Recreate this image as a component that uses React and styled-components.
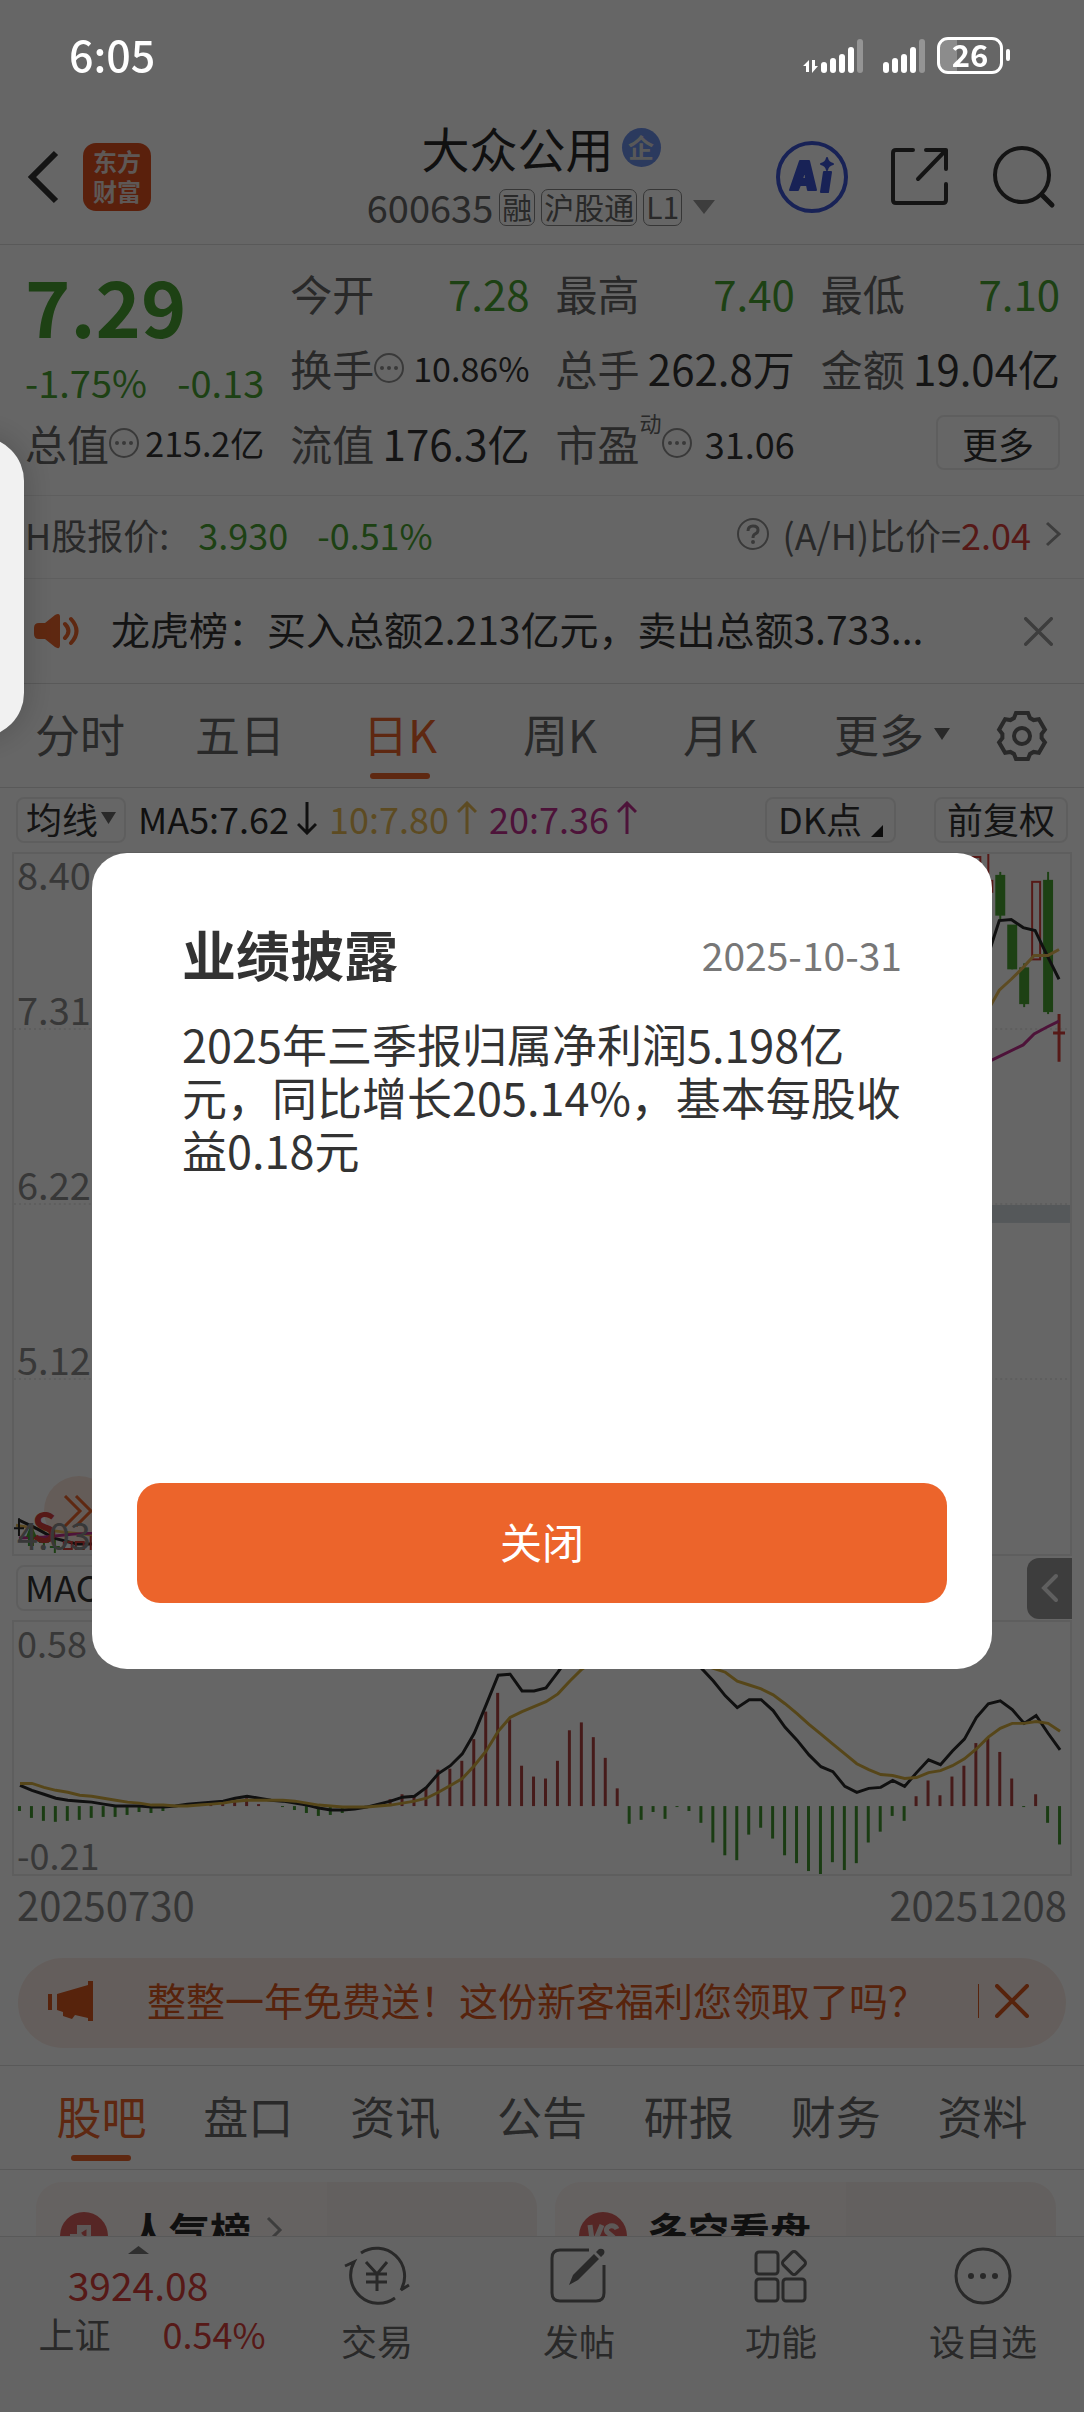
import React, { useState } from "react";
import styled, { createGlobalStyle } from "styled-components";

const GlobalStyle = createGlobalStyle`
  * {
    box-sizing: border-box;
  }

  body {
    margin: 0;
    background: #fff;
    color: #333;
    font-family: "Noto Sans CJK SC", sans-serif;
  }

  button {
    margin: 0;
    padding: 0;
    border: 0;
    background: none;
    color: inherit;
    font: inherit;
    cursor: pointer;
  }

  a {
    color: inherit;
    text-decoration: none;
  }

  svg {
    display: block;
  }
`;

const colors = {
  up: "#d8403a",
  down: "#4aa232",
  orange: "#ec642b",
  text: "#333",
  label: "#666",
  axis: "#8c8c8c",
  line: "#dedede",
  box: "#ececec",
  ma10: "#e8bb55",
  ma20: "#c03090",
};

const Page = styled.div`
  display: flex;
  flex-direction: column;
  height: 100vh;
  overflow: hidden;
`;

const Main = styled.main`
  flex: 1;
  min-height: 0;
  overflow: hidden;
`;

/* status bar */

const StatusBar = styled.div`
  position: relative;
  z-index: 20;
  display: flex;
  align-items: center;
  justify-content: space-between;
  height: 114px;
  padding: 0 74px 4px 69px;
  color: #fff;
`;

const Clock = styled.time`
  padding-bottom: 4px;
  font-size: 43px;
  font-weight: 500;
  line-height: 48px;
`;

const StatusIcons = styled.div`
  display: flex;
  align-items: center;
  gap: 12px;
`;

const Battery = styled.div`
  display: flex;
  align-items: center;
  gap: 3px;

  &::after {
    content: "";
    width: 4px;
    height: 12px;
    border-radius: 2px;
    background: #fff;
  }
`;

const BatteryCell = styled.div`
  width: 66px;
  height: 37px;
  border: 3px solid #fff;
  border-radius: 11px;
  background: linear-gradient(to right, #8c8c8c 28%, transparent 28%);
  font-size: 31px;
  font-weight: 700;
  line-height: 28px;
  text-align: center;
`;

/* header */

const Header = styled.header`
  display: grid;
  grid-template-columns: 1fr auto 1fr;
  align-items: center;
  height: 131px;
  padding: 0 28px 4px 26px;
  border-bottom: 1px solid ${colors.line};
`;

const HeaderLeft = styled.div`
  display: flex;
  align-items: center;
  gap: 21px;
`;

const Logo = styled.a`
  width: 68px;
  height: 68px;
  padding: 3px 0;
  border-radius: 13px;
  background: #e0501f;
  color: #eadcd6;
  font-size: 24px;
  font-weight: 700;
  line-height: 30px;
  text-align: center;
`;

const HeaderCenter = styled.div`
  display: flex;
  flex-direction: column;
  align-items: center;
`;

const StockName = styled.h1`
  display: flex;
  align-items: center;
  gap: 8px;
  margin: 0;
  font-size: 48px;
  font-weight: 400;
  line-height: 60px;
  color: #2a2a2a;
`;

const CompanyBadge = styled.span`
  width: 39px;
  height: 39px;
  border-radius: 50%;
  background: #6d91ec;
  color: #ddd;
  font-size: 26px;
  font-weight: 700;
  line-height: 38px;
  text-align: center;
`;

const StockCode = styled.button`
  display: flex;
  align-items: center;
  gap: 6px;
  color: ${colors.label};
  font-size: 38px;
  line-height: 60px;
`;

const Tag = styled.span`
  height: 37px;
  padding: 0 2px;
  border: 1px solid #888;
  border-radius: 7px;
  font-size: 30px;
  line-height: 33px;
`;

const CodeCaret = styled.span`
  margin-left: 5px;
`;

const HeaderRight = styled.div`
  display: flex;
  align-items: center;
  justify-content: flex-end;
  gap: 41px;
`;

/* quote */

const Quote = styled.section`
  display: grid;
  grid-template-columns: repeat(4, 1fr);
  grid-template-rows: repeat(3, 75px);
  column-gap: 26px;
  height: 251px;
  padding: 10px 24px 16px 25px;
  border-bottom: 1px solid ${colors.box};
`;

const PriceBlock = styled.div`
  grid-row: span 2;
  display: flex;
  flex-direction: column;
  color: ${colors.down};
`;

const Price = styled.strong`
  font-size: 77px;
  font-weight: 700;
  line-height: 100px;
`;

const Change = styled.div`
  display: flex;
  justify-content: space-between;
  font-size: 38px;
  line-height: 54px;
`;

const Cell = styled.div`
  display: flex;
  align-items: center;
  justify-content: space-between;
  white-space: nowrap;
  color: ${(p) => p.$color || colors.text};
  font-size: ${(p) => p.$size || 42}px;
`;

const CellLabel = styled.span`
  display: flex;
  align-items: center;
  color: ${colors.label};
  font-size: 42px;

  sup {
    align-self: flex-start;
    font-size: 22px;
    line-height: 20px;
  }
`;

const MoreButton = styled.button`
  justify-self: end;
  align-self: center;
  width: 124px;
  height: 55px;
  border: 2px solid ${colors.box};
  border-radius: 8px;
  font-size: 36px;
  line-height: 46px;
`;

const HShare = styled.section`
  display: flex;
  align-items: center;
  justify-content: space-between;
  height: 83px;
  padding: 0 22px 6px 25px;
  border-bottom: 1px solid ${colors.box};
  color: ${colors.label};
  font-size: 36px;
`;

const HShareSide = styled.div`
  display: flex;
  align-items: center;
  gap: ${(p) => p.$gap}px;
`;

const Tinted = styled.span`
  color: ${(p) => p.$color};
`;

const News = styled.section`
  display: flex;
  align-items: center;
  height: 105px;
  padding: 0 31px 0 32px;
  border-bottom: 1px solid ${colors.line};
`;

const NewsText = styled.p`
  flex: 1;
  margin: 0 0 0 31px;
  padding-bottom: 6px;
  font-size: 39px;
`;

/* tabs */

const ChartTabs = styled.nav`
  display: grid;
  grid-template-columns: repeat(5, 160fr) 184fr 100fr;
  height: 104px;
  border-bottom: 1px solid ${colors.line};
`;

const Tab = styled.button`
  position: relative;
  display: flex;
  flex: 1;
  align-items: center;
  justify-content: center;
  gap: 10px;
  padding-bottom: 4px;
  color: ${(p) => (p.$active ? colors.orange : colors.label)};
  font-size: 45px;

  &::after {
    content: "";
    display: ${(p) => (p.$active ? "block" : "none")};
    position: absolute;
    bottom: 8px;
    left: calc(50% - 30px);
    width: 60px;
    height: 6px;
    border-radius: 3px;
    background: ${colors.orange};
  }
`;

const GearButton = styled.button`
  padding-left: 12px;
`;

/* chart */

const Indicators = styled.div`
  display: flex;
  align-items: center;
  gap: 12px;
  height: 64px;
  padding: 0 16px;
  font-size: 36px;
  white-space: nowrap;
`;

const BoxButton = styled.button`
  display: flex;
  align-items: center;
  gap: 3px;
  height: 46px;
  padding: 0 ${(p) => p.$pad || 8}px 4px;
  border: 2px solid ${colors.box};
  border-radius: 8px;
  font-size: 36px;
  line-height: 38px;
`;

const MaValue = styled.span`
  display: flex;
  align-items: center;
  gap: 8px;
  padding-bottom: 4px;
  color: ${(p) => p.$color};
`;

const IndicatorActions = styled.div`
  display: flex;
  flex: 1;
  justify-content: flex-end;
  gap: 38px;
`;

const Corner = styled.i`
  align-self: flex-end;
  width: 0;
  height: 0;
  margin-left: 6px;
  border-bottom: 12px solid #222;
  border-left: 12px solid transparent;
`;

const Chart = styled.div`
  position: relative;
  display: grid;
  height: ${(p) => p.$height}px;
  margin: 0 12px;
  border: 2px solid ${colors.box};

  > * {
    grid-area: 1 / 1;
  }
`;

const Plot = styled.svg`
  position: relative;
  width: 100%;
  height: 100%;
  pointer-events: none;
`;

const Scale = styled.div`
  position: relative;
  display: grid;
  grid-auto-rows: minmax(0, 1fr);
  color: ${colors.axis};
  font-size: ${(p) => p.$size}px;
  line-height: 32px;
  pointer-events: none;
`;

const ScaleRow = styled.div`
  display: flex;
  flex-direction: column;
  justify-content: ${(p) => (p.$both ? "space-between" : "flex-end")};
  padding: 4px 0 4px 3px;
`;

const ExpandButton = styled.button`
  position: absolute;
  bottom: 8px;
  left: 30px;
  display: flex;
  align-items: center;
  justify-content: center;
  width: 70px;
  height: 70px;
  border-radius: 50%;
  background: #fbe6dc;
`;

const SubHeader = styled.div`
  display: flex;
  align-items: center;
  justify-content: space-between;
  height: 64px;
  padding: 0 12px 0 16px;
`;

const Collapse = styled.button`
  display: flex;
  align-items: center;
  justify-content: center;
  width: 45px;
  height: 61px;
  border-radius: 12px 0 0 12px;
  background: #999;
`;

const Dates = styled.div`
  display: flex;
  justify-content: space-between;
  height: 82px;
  padding: 0 17px;
  color: #888;
  font-size: 40px;
  line-height: 57px;
`;

const Banner = styled.div`
  display: flex;
  align-items: center;
  height: 90px;
  margin: 0 18px 17px;
  padding: 0 37px 4px 29px;
  border-radius: 45px;
  background: #fbece6;
  color: #d9571f;
  font-size: 39px;

  a {
    flex: 1;
    margin-left: 54px;
    padding-bottom: 4px;
  }
`;

const BannerClose = styled.button`
  padding-left: 16px;
  border-left: 1px solid #d9571f;
`;

const InfoTabs = styled.nav`
  display: flex;
  height: 105px;
  padding: 0 28px;
  border-top: 1px solid ${colors.line};
  border-bottom: 1px solid ${colors.line};
`;

const Cards = styled.div`
  display: grid;
  grid-template-columns: 1fr 1fr;
  gap: 18px;
  padding: 12px 28px 0 36px;
`;

const Card = styled.a`
  display: flex;
  align-items: center;
  gap: 20px;
  height: 160px;
  padding: 0 24px 52px;
  border-radius: 26px;
  background: linear-gradient(to right, #fdf4f2 58%, #f8efed 58%);
  color: #2a2a2a;
  font-size: 41px;
  font-weight: 700;
`;

const CardTitle = styled.span`
  display: flex;
  align-items: center;
  gap: 14px;
  padding-bottom: 12px;
`;

/* bottom bar */

const BottomBar = styled.footer`
  display: grid;
  grid-template-columns: 276fr repeat(4, 202fr);
  height: 176px;
  border-top: 1px solid ${colors.line};
  background: #fbfbfb;
  color: ${colors.label};
  font-size: 36px;
`;

const IndexBlock = styled.button`
  display: flex;
  flex-direction: column;
  align-items: center;
  padding-top: 9px;
  color: ${colors.up};
`;

const IndexValue = styled.span`
  margin-top: 4px;
  font-size: 39px;
  line-height: 52px;
`;

const IndexRow = styled.span`
  display: flex;
  gap: 52px;
  margin-left: 28px;
  line-height: 46px;
`;

const NavItem = styled.button`
  display: flex;
  flex-direction: column;
  align-items: center;
  padding: 9px 0 0;
  line-height: 52px;

  svg {
    margin-bottom: 8px;
  }
`;

/* dialog */

const Overlay = styled.div`
  position: fixed;
  inset: 0;
  z-index: 10;
  display: flex;
  align-items: center;
  justify-content: center;
  padding: 110px 92px 0;
  background: rgba(0, 0, 0, 0.6);
`;

const Dialog = styled.section`
  width: 100%;
  padding: 69px 45px 66px;
  border-radius: 35px;
  background: #fff;
`;

const DialogHead = styled.div`
  display: flex;
  align-items: center;
  justify-content: space-between;
  margin: 0 45px 31px;
`;

const DialogTitle = styled.h2`
  margin: 0;
  font-size: 54px;
  font-weight: 700;
  line-height: 64px;
`;

const DialogDate = styled.time`
  color: #777;
  font-size: 39px;
`;

const DialogText = styled.p`
  min-height: 466px;
  margin: 0 45px;
  font-size: 45px;
  line-height: 53px;
`;

const DialogButton = styled.button`
  display: block;
  width: 100%;
  height: 120px;
  padding-bottom: 6px;
  border-radius: 23px;
  background: ${colors.orange};
  color: #fff;
  font-size: 42px;
`;

const SideHandle = styled.div`
  position: fixed;
  top: 437px;
  left: -64px;
  z-index: 30;
  width: 88px;
  height: 300px;
  border-radius: 44px;
  background: #f1f1f1;
  box-shadow: 0 0 34px rgba(0, 0, 0, 0.22);
`;

/* icons */

const Signal = ({ data }) => (
  <svg width={data ? 68 : 42} height="37" viewBox={data ? "-18 0 68 37" : "0 0 42 37"}>
    {data && (
      <path d="M-18 29 L-12 23 V35 H-15 V29 Z M-9 23 H-6 V29 L-3 29 L-9 36 Z" fill="#fff" />
    )}
    <g fill="#fff">
      <rect x="0" y="25" width="6" height="11" rx="3" />
      <rect x="9" y="21" width="6" height="15" rx="3" />
      <rect x="18" y="17" width="6" height="19" rx="3" />
      <rect x="27" y="10" width="6" height="26" rx="3" />
      <rect x="36" y="2" width="6" height="34" rx="3" fill="#949494" />
    </g>
  </svg>
);

const Chevron = ({ w, h, stroke, color, left, round }) => (
  <svg width={w} height={h} viewBox={`0 0 ${w} ${h}`}>
    <polyline
      points={
        left
          ? `${w - stroke},${stroke} ${stroke},${h / 2} ${w - stroke},${h - stroke}`
          : `${stroke},${stroke} ${w - stroke},${h / 2} ${stroke},${h - stroke}`
      }
      fill="none"
      stroke={color}
      strokeWidth={stroke}
      strokeLinecap={round ? "round" : "butt"}
    />
  </svg>
);

const Caret = ({ w, h, color, up }) => (
  <svg width={w} height={h} viewBox="0 0 10 10" preserveAspectRatio="none">
    <path d={up ? "M0 10 L5 0 L10 10 Z" : "M0 0 H10 L5 10 Z"} fill={color} />
  </svg>
);

const Cross = ({ size, color, stroke }) => (
  <svg width={size} height={size} viewBox="0 0 34 34">
    <path d="M2 2 L32 32 M32 2 L2 32" stroke={color} strokeWidth={stroke} strokeLinecap="round" />
  </svg>
);

const Arrow = ({ up }) => (
  <svg width="20" height="34" viewBox="0 0 20 34">
    <path
      d={up ? "M10 33 V2 M1 11 L10 2 L19 11" : "M10 1 V32 M1 23 L10 32 L19 23"}
      fill="none"
      stroke="currentColor"
      strokeWidth="3"
    />
  </svg>
);

const Dots = () => (
  <svg width="30" height="30" viewBox="0 0 30 30">
    <circle cx="15" cy="15" r="14" fill="none" stroke="#909090" strokeWidth="2" />
    <g fill="#909090">
      <circle cx="8" cy="15" r="2" />
      <circle cx="15" cy="15" r="2" />
      <circle cx="22" cy="15" r="2" />
    </g>
  </svg>
);

const AiIcon = () => (
  <svg width="72" height="72" viewBox="0 0 72 72">
    <circle cx="36" cy="36" r="34" fill="none" stroke="#3d56d8" strokeWidth="4" />
    <g fill="#3d56d8" stroke="#3d56d8" strokeWidth="2" strokeLinejoin="round">
      <path
        fillRule="evenodd"
        d="M24 20 H33 L40 49 H32 L31 44 H24 L22 49 H14 Z M29 28 L26 38 H30 Z"
      />
      <path d="M48 31 H55 L52 51 H45 Z" />
      <path d="M51 17 Q52 22 57 23 Q52 24 51 29 Q50 24 45 23 Q50 22 51 17 Z" />
    </g>
  </svg>
);

const ShareIcon = () => (
  <svg width="62" height="62" viewBox="0 0 62 62">
    <path
      d="M24 4 H7 Q4 4 4 7 V54 Q4 57 7 57 H54 Q57 57 57 54 V38 M37 4 H57 V23 M57 4 L29 33"
      fill="none"
      stroke="#333"
      strokeWidth="4"
      strokeLinecap="round"
      strokeLinejoin="round"
    />
  </svg>
);

const SearchIcon = () => (
  <svg width="64" height="64" viewBox="0 0 64 64">
    <circle cx="30" cy="30" r="27" fill="none" stroke="#333" strokeWidth="4" />
    <path d="M50 50 L60 60" stroke="#333" strokeWidth="5" strokeLinecap="round" />
  </svg>
);

const QuestionIcon = () => (
  <svg width="34" height="34" viewBox="0 0 34 34" fill="none" stroke="#909090" strokeWidth="3">
    <circle cx="17" cy="17" r="15" strokeWidth="2" />
    <path d="M12 14 Q12 9 17 9 Q22 9 22 13 Q22 16 19 17 Q17 18 17 21" />
    <circle cx="17" cy="25" r="1" strokeWidth="2" />
  </svg>
);

const SpeakerIcon = () => (
  <svg width="48" height="40" viewBox="0 0 48 40">
    <path
      d="M7 12 H13 L23 4 Q28 1 28 6 V34 Q28 39 23 36 L13 28 H7 Q2 28 2 23 V17 Q2 12 7 12 Z"
      fill={colors.orange}
    />
    <path
      d="M33 13 Q40 20 33 27 M39 8 Q50 20 39 32"
      fill="none"
      stroke={colors.orange}
      strokeWidth="4"
      strokeLinecap="round"
    />
  </svg>
);

const MegaphoneIcon = () => (
  <svg width="46" height="40" viewBox="0 0 46 40" fill="#d9571f">
    <rect x="1" y="13" width="4" height="16" />
    <path d="M10 13 L41 4 V0 H46 V40 H41 V37 L28 34 L25 38 L16 35 V31 L10 29 Z" />
  </svg>
);

// Outline of one tooth, repeated every 60 degrees
const tooth = [[-8, -18], [-6, -23], [6, -23], [8, -18]];
const gearPoints = [0, 1, 2, 3, 4, 5]
  .flatMap((k) => {
    const a = (k * Math.PI) / 3;
    return tooth.map(([x, y]) => {
      const px = 26 + x * Math.cos(a) - y * Math.sin(a);
      const py = 26 + x * Math.sin(a) + y * Math.cos(a);
      return `${px.toFixed(1)},${py.toFixed(1)}`;
    });
  })
  .join(" ");

const GearIcon = () => (
  <svg width="52" height="52" viewBox="0 0 52 52" fill="none" stroke={colors.label} strokeWidth="4">
    <polygon points={gearPoints} />
    <circle cx="26" cy="26" r="8" />
  </svg>
);

const TradeIcon = () => (
  <svg width="66" height="60" viewBox="0 0 66 60" fill="none" stroke="#666" strokeWidth="3">
    <path d="M17 7 A28 28 0 0 1 57 44 L65 39" />
    <path d="M51 52 A28 28 0 0 1 10 16 L1 20" />
    <path d="M22 16 L33 28 L43 16 M33 28 V45 M22 28 H43 M22 36 H43" />
  </svg>
);

const PostIcon = () => (
  <svg width="60" height="60" viewBox="0 0 60 60">
    <path
      d="M40 4 H11 Q3 4 3 12 V47 Q3 55 11 55 H47 Q55 55 55 47 V19"
      fill="none"
      stroke="#666"
      strokeWidth="3"
    />
    <path d="M20 39 L24 29 L45 8 L50 13 L29 34 Z M47 6 L50 3 Q53 2 55 4 Q56 6 55 8 L52 11 Z" fill="#666" />
  </svg>
);

const FeatureIcon = () => (
  <svg width="60" height="60" viewBox="0 0 60 60" fill="none" stroke="#666" strokeWidth="3">
    <rect x="5" y="6" width="22" height="22" rx="3" />
    <rect x="5" y="33" width="22" height="22" rx="3" />
    <rect x="32" y="33" width="22" height="22" rx="3" />
    <rect x="34" y="8" width="18" height="18" rx="3" transform="rotate(45 43 17)" />
  </svg>
);

const WatchIcon = () => (
  <svg width="60" height="60" viewBox="0 0 60 60">
    <circle cx="30" cy="30" r="27" fill="none" stroke="#666" strokeWidth="3" />
    <g fill="#666">
      <circle cx="18" cy="30" r="3" />
      <circle cx="30" cy="30" r="3" />
      <circle cx="42" cy="30" r="3" />
    </g>
  </svg>
);

const RankIcon = () => (
  <svg width="48" height="48" viewBox="0 0 48 48">
    <circle cx="24" cy="24" r="24" fill="#d8605c" />
    <path d="M10 22 H17 V13 H31 V25 H38 V36 H10 Z" fill="#e8dcda" />
    <path d="M22 22 L25 20 V31" fill="none" stroke="#d8605c" strokeWidth="3" />
  </svg>
);

const VsIcon = () => (
  <svg width="48" height="48" viewBox="0 0 48 48">
    <circle cx="24" cy="24" r="24" fill="#d8605c" />
    <path
      d="M11 13 L14 34 L23 13 M38 17 Q36 13 31 14 Q26 16 28 20 L34 25 Q36 31 30 33 Q25 34 22 31"
      fill="none"
      stroke="#e8dcda"
      strokeWidth="5"
    />
  </svg>
);

/* chart data */

const macdBars = [
  -5, -12, -15, -16, -15, -14, -12, -11, -11, -9, -6, -7, -5, -1, 0, 2, 3, 5, 7, 8, 2, 0,
  -1, -4, -7, -10, -9, -7, -3, 0, 3, 7, 12, 10, 19, 37, 38, 46, 68, 96, 115, 88, 41, 30,
  28, 46, 77, 85, 70, 49, 18, -18, -14, -6, -13, -1, -5, -17, -37, -50, -55, -29, -22, -33,
  -50, -58, -66, -69, -57, -65, -58, -37, -26, -10, -15, 10, 26, 11, 30, 41, 64, 69, 55, 28,
  -1, 12, -17, -39,
];

const dif = [
  166, 171, 175, 179, 181, 182, 183, 185, 187, 187, 187, 188, 188, 187, 185, 184, 183, 182,
  179, 177, 179, 181, 182, 184, 186, 189, 191, 191, 190, 188, 185, 182, 178, 177, 168, 154,
  146, 134, 113, 84, 54, 53, 70, 70, 67, 51, 34, 24, 18, 14, 12, 12, 14, 18, 24, 32, 40, 47,
  60, 75, 87, 79, 79, 90, 107, 120, 135, 147, 152, 167, 173, 169, 168, 161, 167, 153, 140,
  145, 131, 119, 97, 83, 80, 89, 103, 95, 113, 130,
];

const dea = [
  164, 164, 168, 171, 173, 176, 177, 179, 181, 183, 184, 186, 186, 187, 187, 186, 185, 184,
  182, 181, 181, 181, 181, 182, 184, 186, 187, 188, 188, 188, 187, 186, 184, 182, 179, 173,
  166, 159, 146, 131, 111, 97, 91, 86, 81, 73, 60, 48, 40, 34, 30, 28, 27, 28, 30, 34, 38,
  43, 47, 51, 60, 64, 68, 74, 83, 93, 104, 114, 124, 134, 144, 150, 155, 156, 159, 158, 153,
  151, 146, 139, 129, 117, 108, 103, 103, 101, 103, 111,
];

const candles = [
  { x: 977, top: 3, bottom: 60, high: 3, low: 40, up: true },
  { x: 989, top: 27, bottom: 38, high: 0, low: 38, up: true },
  { x: 1001, top: 22, bottom: 61, high: 18, low: 66 },
  { x: 1013, top: 72, bottom: 115, high: 72, low: 116 },
  { x: 1025, top: 115, bottom: 150, high: 110, low: 154 },
  { x: 1037, top: 28, bottom: 106, high: 28, low: 106, up: true },
  { x: 1049, top: 27, bottom: 158, high: 18, low: 161 },
];

const toPoints = (values) => values.map((y, i) => `${6 + i * 12},${y}`).join(" ");

const KLineChart = () => (
  <Plot viewBox="0 0 1060 704" preserveAspectRatio="none" aria-label="日K">
    <g stroke="#d5d5d5" strokeWidth="1" strokeDasharray="2 3">
      <path d="M0 176 H1060 M0 352 H1060 M0 528 H1060" />
    </g>
    <rect x="600" y="353" width="460" height="18" fill="#d4dbe0" />
    {candles.map((c) => (
      <g key={c.x} stroke={c.up ? colors.up : colors.down} strokeWidth="2">
        {(!c.up || c.high < c.top) && (
          <path d={`M${c.x - 11} ${c.high} V${c.up ? c.top : c.low}`} />
        )}
        <rect
          x={c.x - 15}
          y={c.top}
          width="8"
          height={c.bottom - c.top}
          fill={c.up ? "none" : colors.down}
        />
      </g>
    ))}
    <path d="M1049 161 V209 M1043 180 H1055" stroke={colors.up} strokeWidth="3" />
    <g fill="none" strokeWidth="3">
      <polyline points="960,150 980,95 989,67 1001,66 1013,74 1025,77 1037,102 1049,126" stroke="#2a2a2a" />
      <polyline points="960,177 980,153 989,137 1001,126 1013,114 1024,102 1038,102 1049,96" stroke={colors.ma10} />
      <polyline points="960,217 980,208 1013,192 1024,181 1037,174 1049,168" stroke={colors.ma20} />
      <polyline points="2,675 20,678 50,682 80,685 120,690" stroke={colors.ma10} />
      <polyline points="5,670 20,677 40,688 63,694 80,694 120,692" stroke="#2a2a2a" />
      <polyline points="5,688 30,687 60,684 80,683 120,680" stroke={colors.ma20} />
    </g>
    <path d="M5 668 V686 M0 678 H10" stroke="#2a2a2a" strokeWidth="2" />
    <path d="M12 687 L17 674 L23 687 H20 V696 H14 V687 Z" fill={colors.down} />
    <path d="M30 688 V700 M25 692 H35 M41 690 V703 M36 697 H46" stroke={colors.down} strokeWidth="2" />
    <path d="M50 692 H58 V699 H50 Z M62 692 H70 V699 H62 Z M77 686 V700" fill="none" stroke={colors.up} strokeWidth="2" />
    <text x="18" y="692" fill={colors.up} fontSize="40" fontWeight="700">S</text>
  </Plot>
);

const MacdChart = () => (
  <Plot viewBox="0 0 1060 256" preserveAspectRatio="none" aria-label="MACD">
    {macdBars.map((v, i) => (
      <rect
        key={i}
        x={4 + i * 12}
        y={v > 0 ? 187 - v : 187}
        width="3"
        height={Math.abs(v)}
        fill={v > 0 ? "#b04441" : "#439630"}
      />
    ))}
    <polyline points={toPoints(dif)} fill="none" stroke="#2a2a2a" strokeWidth="3" />
    <polyline points={toPoints(dea)} fill="none" stroke="#d8b040" strokeWidth="3" />
  </Plot>
);

const chartTabs = ["分时", "五日", "日K", "周K", "月K"];
const infoTabs = ["股吧", "盘口", "资讯", "公告", "研报", "财务", "资料"];

const App = () => {
  const [open, setOpen] = useState(true);
  const [period, setPeriod] = useState("日K");
  const [section, setSection] = useState("股吧");

  return (
    <>
      <GlobalStyle />
      <Page>
        <StatusBar>
          <Clock>6:05</Clock>
          <StatusIcons>
            <Signal data />
            <Signal />
            <Battery>
              <BatteryCell>26</BatteryCell>
            </Battery>
          </StatusIcons>
        </StatusBar>

        <Header>
          <HeaderLeft>
            <button aria-label="返回">
              <Chevron w={36} h={60} stroke={6} color="#333" left />
            </button>
            <Logo href="#home">
              东方
              <br />
              财富
            </Logo>
          </HeaderLeft>
          <HeaderCenter>
            <StockName>
              大众公用<CompanyBadge>企</CompanyBadge>
            </StockName>
            <StockCode>
              600635
              <Tag>融</Tag>
              <Tag>沪股通</Tag>
              <Tag>L1</Tag>
              <CodeCaret><Caret w={22} h={14} color="#999" /></CodeCaret>
            </StockCode>
          </HeaderCenter>
          <HeaderRight>
            <button aria-label="AI"><AiIcon /></button>
            <button aria-label="分享"><ShareIcon /></button>
            <button aria-label="搜索"><SearchIcon /></button>
          </HeaderRight>
        </Header>

        <Main>
          <Quote>
            <PriceBlock>
              <Price>7.29</Price>
              <Change>
                <span>-1.75%</span>
                <span>-0.13</span>
              </Change>
            </PriceBlock>
            <Cell $color={colors.down}><CellLabel>今开</CellLabel>7.28</Cell>
            <Cell $color={colors.down}><CellLabel>最高</CellLabel>7.40</Cell>
            <Cell $color={colors.down}><CellLabel>最低</CellLabel>7.10</Cell>
            <Cell $size={34}><CellLabel>换手<Dots /></CellLabel>10.86%</Cell>
            <Cell><CellLabel>总手</CellLabel>262.8万</Cell>
            <Cell><CellLabel>金额</CellLabel>19.04亿</Cell>
            <Cell $size={34}><CellLabel>总值<Dots /></CellLabel>215.2亿</Cell>
            <Cell><CellLabel>流值</CellLabel>176.3亿</Cell>
            <Cell $size={36}><CellLabel>市盈<sup>动</sup><Dots /></CellLabel>31.06</Cell>
            <MoreButton>更多</MoreButton>
          </Quote>

          <HShare>
            <HShareSide $gap={29}>
              <span>H股报价:</span>
              <Tinted $color={colors.down}>3.930</Tinted>
              <Tinted $color={colors.down}>-0.51%</Tinted>
            </HShareSide>
            <HShareSide $gap={13}>
              <QuestionIcon />
              <span>
                (A/H)比价=<Tinted $color={colors.up}>2.04</Tinted>
              </span>
              <Chevron w={18} h={28} stroke={3} color="#999" />
            </HShareSide>
          </HShare>

          <News>
            <SpeakerIcon />
            <NewsText>龙虎榜：买入总额2.213亿元，卖出总额3.733...</NewsText>
            <button aria-label="关闭公告"><Cross size={29} color="#999" stroke={4} /></button>
          </News>

          <ChartTabs>
            {chartTabs.map((t) => (
              <Tab key={t} $active={t === period} onClick={() => setPeriod(t)}>{t}</Tab>
            ))}
            <Tab>
              更多<Caret w={16} h={12} color="#666" />
            </Tab>
            <GearButton aria-label="设置"><GearIcon /></GearButton>
          </ChartTabs>

          <Indicators>
            <BoxButton>均线<Caret w={15} h={12} color="#666" /></BoxButton>
            <MaValue $color="#2a2a2a">MA5:7.62<Arrow /></MaValue>
            <MaValue $color={colors.ma10}>10:7.80<Arrow up /></MaValue>
            <MaValue $color={colors.ma20}>20:7.36<Arrow up /></MaValue>
            <IndicatorActions>
              <BoxButton $pad={11}>DK点<Corner /></BoxButton>
              <BoxButton $pad={11}>前复权</BoxButton>
            </IndicatorActions>
          </Indicators>

          <Chart $height={704}>
            <ExpandButton aria-label="展开">
              <svg width="34" height="32" viewBox="0 0 34 32">
                <path d="M3 1 L18 16 L3 31 M14 1 L29 16 L14 31" fill="none" stroke={colors.orange} strokeWidth="3" />
              </svg>
            </ExpandButton>
            <KLineChart />
            <Scale $size={38}>
              <ScaleRow $both><span>8.40</span><span>7.31</span></ScaleRow>
              <ScaleRow>6.22</ScaleRow>
              <ScaleRow>5.12</ScaleRow>
              <ScaleRow>4.03</ScaleRow>
            </Scale>
          </Chart>

          <SubHeader>
            <BoxButton $pad={7}>MACD</BoxButton>
            <Collapse aria-label="收起"><Chevron w={20} h={32} stroke={4} color="#eee" left round /></Collapse>
          </SubHeader>

          <Chart $height={256}>
            <MacdChart />
            <Scale $size={36}>
              <ScaleRow $both><span>0.58</span><span>-0.21</span></ScaleRow>
            </Scale>
          </Chart>

          <Dates>
            <span>20250730</span>
            <span>20251208</span>
          </Dates>

          <Banner>
            <MegaphoneIcon />
            <a href="#gift">整整一年免费送！这份新客福利您领取了吗？</a>
            <BannerClose aria-label="关闭横幅"><Cross size={34} color="#d9571f" stroke={4} /></BannerClose>
          </Banner>

          <InfoTabs>
            {infoTabs.map((t) => (
              <Tab key={t} $active={t === section} onClick={() => setSection(t)}>{t}</Tab>
            ))}
          </InfoTabs>

          <Cards>
            <Card href="#rank">
              <RankIcon />
              <CardTitle>人气榜<Chevron w={18} h={30} stroke={3} color="#999" /></CardTitle>
            </Card>
            <Card href="#vote">
              <VsIcon />
              <CardTitle>多空看盘</CardTitle>
            </Card>
          </Cards>
        </Main>

        <BottomBar>
          <IndexBlock>
            <Caret w={21} h={8} color="#777" up />
            <IndexValue>3924.08</IndexValue>
            <IndexRow>
              <Tinted $color={colors.label}>上证</Tinted>
              <span>0.54%</span>
            </IndexRow>
          </IndexBlock>
          <NavItem><TradeIcon />交易</NavItem>
          <NavItem><PostIcon />发帖</NavItem>
          <NavItem><FeatureIcon />功能</NavItem>
          <NavItem><WatchIcon />设自选</NavItem>
        </BottomBar>
      </Page>

      {open && (
        <Overlay>
          <Dialog role="dialog" aria-modal="true" aria-labelledby="dialog-title">
            <DialogHead>
              <DialogTitle id="dialog-title">业绩披露</DialogTitle>
              <DialogDate>2025-10-31</DialogDate>
            </DialogHead>
            <DialogText>
              2025年三季报归属净利润5.198亿元，同比增长205.14%，基本每股收益0.18元
            </DialogText>
            <DialogButton onClick={() => setOpen(false)}>关闭</DialogButton>
          </Dialog>
        </Overlay>
      )}
      <SideHandle />
    </>
  );
};

export default App;
